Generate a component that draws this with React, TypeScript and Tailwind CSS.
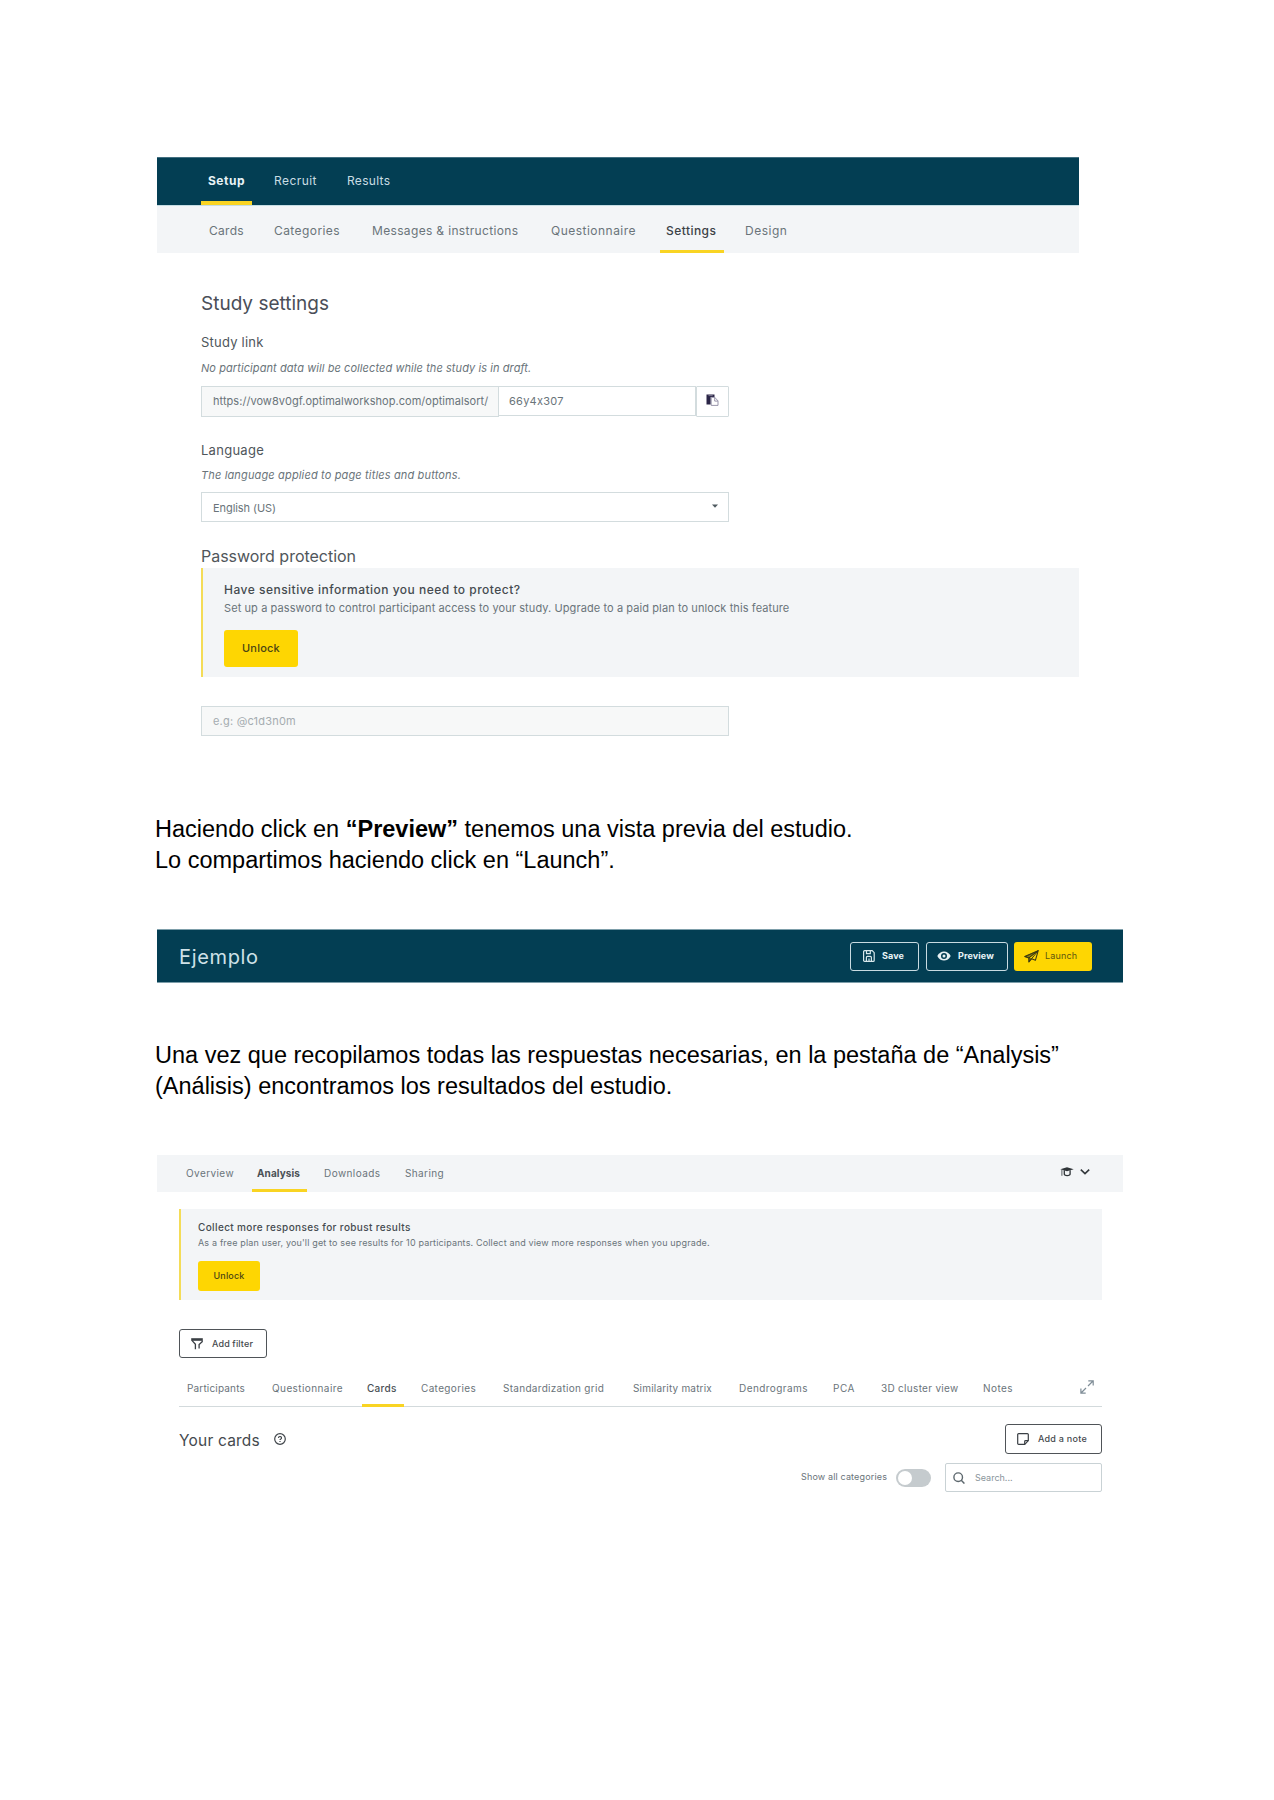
type Tab = { label: string; cell: string; active?: boolean };

const mainTabs: Tab[] = [
  { label: "Setup", cell: "w-[51px] pl-[7px] tracking-[0.51px]", active: true },
  { label: "Recruit", cell: "ml-[22px] w-[43px] tracking-[0.45px]" },
  { label: "Results", cell: "ml-[30px] w-[43px] tracking-[0.3px]" },
];

const setupTabs: Tab[] = [
  { label: "Cards", cell: "w-[35px] tracking-[0.3px]" },
  { label: "Categories", cell: "ml-[30px] w-[66px] tracking-[0.42px]" },
  { label: "Messages & instructions", cell: "ml-[32px] w-[147px] tracking-[0.34px]" },
  { label: "Questionnaire", cell: "ml-[32px] w-[85px] tracking-[0.48px]" },
  { label: "Settings", cell: "ml-[24px] w-[64px] pl-[6px] tracking-[0.45px]", active: true },
  { label: "Design", cell: "ml-[21px] w-[43px] tracking-[0.52px]" },
];

const resultTabs: Tab[] = [
  { label: "Overview", cell: "w-[48px] tracking-[0.41px]" },
  { label: "Analysis", cell: "ml-[18px] w-[55px] pl-[5px] tracking-[0.1px]", active: true },
  { label: "Downloads", cell: "ml-[17px] w-[56px] tracking-[0.43px]" },
  { label: "Sharing", cell: "ml-[25px] w-[39px] tracking-[0.38px]" },
];

const analysisTabs: Tab[] = [
  { label: "Participants", cell: "w-[58px] tracking-[0.17px]" },
  { label: "Questionnaire", cell: "ml-[27px] w-[71px] tracking-[0.41px]" },
  { label: "Cards", cell: "ml-[19px] w-[42px] pl-[5px] tracking-[0.28px]", active: true },
  { label: "Categories", cell: "ml-[17px] w-[55px] tracking-[0.35px]" },
  { label: "Standardization grid", cell: "ml-[27px] w-[101px] tracking-[0.29px]" },
  { label: "Similarity matrix", cell: "ml-[29px] w-[79px] tracking-[0.19px]" },
  { label: "Dendrograms", cell: "ml-[27px] w-[69px] tracking-[0.43px]" },
  { label: "PCA", cell: "ml-[25px] w-[23px] tracking-[0.53px]" },
  { label: "3D cluster view", cell: "ml-[25px] w-[77px] tracking-[0.3px]" },
  { label: "Notes", cell: "ml-[25px] w-[30px] tracking-[0.44px]" },
];

function ClipboardIcon() {
  return (
    <svg width="13" height="12" viewBox="0 0 13 12" className="block">
      <path d="M0.5 0.500h8v2.500H4.700v7.600H0.500z" fill="#2a2546" />
      <path d="M2.500 1.600h4.200" stroke="#8e8ba3" strokeWidth="0.800" />
      <path d="M5.200 3.400h3.600l3.200 3.500v4.500H5.200z" fill="#fff" stroke="#8e8ba3" strokeWidth="0.900" />
      <path d="M8.700 3.400v3.700h3.200" fill="none" stroke="#8e8ba3" strokeWidth="0.900" />
    </svg>
  );
}

function SaveIcon() {
  return (
    <svg width="12" height="12" viewBox="0 0 12 12" fill="none" stroke="#d9e8ec" strokeWidth="1.2" className="block">
      <path d="M1.6 0.7h7.6l2 2v7.7a1 1 0 0 1-1 1H1.6a1 1 0 0 1-1-1V1.7a1 1 0 0 1 1-1z" />
      <path d="M3.500 0.800v2.800h3.800v-2.800M3.400 11.300V7.400a1 1 0 0 1 1-1h3a1 1 0 0 1 1 1v3.900" />
      <path d="M6 8.600v2.700" />
    </svg>
  );
}

function EyeIcon() {
  return (
    <svg width="14" height="10" viewBox="0 0 14 10" className="block">
      <path d="M0.3 5C1.8 2 4.2 0.4 7 0.4S12.200 2 13.700 5C12.200 8 9.800 9.600 7 9.600S1.800 8 0.300 5z" fill="#e6f1f4" />
      <circle cx="7" cy="5" r="3" fill="#033e53" />
      <circle cx="7" cy="5" r="1.500" fill="#e6f1f4" />
    </svg>
  );
}

function PlaneIcon() {
  return (
    <svg width="15" height="13" viewBox="0 0 15 13" fill="none" stroke="#3a3a14" strokeLinejoin="round" className="block">
      <path d="M0.800 6.600L14.200 0.700L11.400 10.300L7.600 8.700L4.900 12V7.900z" strokeWidth="1.100" />
      <path d="M4.900 7.900L14.200 0.700L7.600 8.700" strokeWidth="1" />
      <path d="M0.800 6.600L14.200 0.700L4.900 7.900zM4.900 7.900L7.600 8.700L4.900 12z" fill="#3a3a14" fillOpacity="0.550" strokeWidth="0.500" />
    </svg>
  );
}

function GraduationIcon() {
  return (
    <svg width="14" height="10" viewBox="0 0 14 10" className="block">
      <path d="M0.300 2.300L7 0.200L13.700 2.300L7 4.200z" fill="#2f3438" />
      <path d="M4.300 3.200v3.900c0 1 1.200 1.500 2.900 1.500s2.900-.5 2.900-1.500V3.200" fill="none" stroke="#2f3438" strokeWidth="1.300" />
      <path d="M1.900 2.800V8.800" stroke="#555b60" strokeWidth="1" />
    </svg>
  );
}

function ChevronIcon() {
  return (
    <svg width="10" height="6" viewBox="0 0 10 6" fill="none" stroke="#33383c" strokeWidth="1.600" className="block">
      <path d="M0.800 0.700L5 4.700L9.200 0.700" />
    </svg>
  );
}

function FilterIcon() {
  return (
    <svg width="12" height="12" viewBox="0 0 12 12" fill="none" stroke="#3a3f44" className="block">
      <path d="M0.200 1.500h11.600" strokeWidth="2.600" />
      <path d="M0.900 2.400L4.400 6.200V11.200M11.200 2.400v1.200L8.100 6.600v4" strokeWidth="1.300" />
    </svg>
  );
}

function ExpandIcon() {
  return (
    <svg width="14" height="14" viewBox="0 0 14 14" fill="none" stroke="#7f8d97" strokeWidth="1.200" className="block">
      <path d="M8 6L13 1M8.300 0.900h4.900v4.600M6 8l-5 5M0.900 8.600v4.500h4.800" />
    </svg>
  );
}

function HelpIcon() {
  return (
    <svg width="12" height="12" viewBox="0 0 12 12" fill="none" stroke="#41464b" className="block">
      <circle cx="6" cy="6" r="5.300" strokeWidth="1.200" />
      <path d="M4.500 4.900a1.500 1.400 0 1 1 2.100 1.300c-.4.200-.6.400-.6.900" strokeWidth="1.200" />
      <path d="M6 8v1.100" strokeWidth="1.200" />
    </svg>
  );
}

function NoteIcon() {
  return (
    <svg width="12" height="12" viewBox="0 0 12 12" fill="none" stroke="#3a3f44" strokeWidth="1.200" strokeLinejoin="round" className="block">
      <path d="M1.600 0.700h8.800a.9.9 0 0 1 .9.900v6.100l-3.500 3.600H1.600a.9.900 0 0 1-.9-.9V1.600a.9.900 0 0 1 .9-.9z" />
      <path d="M7.700 11.200V8.500a.8.800 0 0 1 .8-.8h2.700" />
    </svg>
  );
}

function SearchIcon() {
  return (
    <svg width="12" height="12" viewBox="0 0 12 12" fill="none" stroke="#5d686e" strokeWidth="1.400" className="block">
      <circle cx="5.200" cy="5.200" r="4.300" />
      <path d="M8 8l3.400 3.600" />
    </svg>
  );
}

function TabItem({ tab, base, active, bar }: { tab: Tab; base: string; active: string; bar: string }) {
  return (
    <div className={`relative flex h-full shrink-0 items-center whitespace-nowrap ${tab.cell} ${tab.active ? active : base}`}>
      {tab.label}
      {tab.active && <span className={`absolute left-0 w-full bg-[#f9d423] ${bar}`} />}
    </div>
  );
}

function StudySettings() {
  return (
    <section className="ml-[157px] w-[922px] pt-[157px] font-[Inter,sans-serif] text-[#6a747a]">
      <nav className="flex h-[48px] items-center border-t border-[#426f80] bg-[#033e53] pl-[44px] text-[12px]">
        {mainTabs.map((t) => (
          <TabItem
            key={t.label}
            tab={t}
            base="pb-px text-[#c9dde3]"
            active="pb-px font-bold text-[#e8f3f6]"
            bar="bottom-0 h-[4px]"
          />
        ))}
      </nav>
      <nav className="flex h-[48px] items-center border-t border-[#c5dde4] bg-[#f3f5f7] pl-[52px] text-[12px]">
        {setupTabs.map((t) => (
          <TabItem key={t.label} tab={t} base="pt-[3px]" active="pt-[3px] font-medium text-[#3c4247]" bar="bottom-0 h-[3px]" />
        ))}
      </nav>
      <div className="pl-[44px]">
        <h1 className="mt-[37px] h-[28px] text-[19px] leading-[28px] text-[#4a4e58]">Study settings</h1>
        <h2 className="mt-[16px] text-[13px] leading-[16px] tracking-[0.21px] text-[#4f565b]">Study link</h2>
        <p className="mt-[10px] whitespace-nowrap text-[11px] leading-[16px] tracking-[0.08px] italic">
          No participant data will be collected while the study is in draft.
        </p>
        <div className="mt-[10px] flex h-[31px] items-start text-[11px] whitespace-nowrap">
          <div className="flex h-[31px] w-[298px] items-center border border-[#d3dcde] bg-[#f7f8f8] pl-[11px] tracking-[0.04px]">
            https://vow8v0gf.optimalworkshop.com/optimalsort/
          </div>
          <div className="flex h-[30px] w-[197px] items-center border-y border-r border-[#d3dcde] pt-px pl-[10px] tracking-[0.25px] [font-feature-settings:'calt'_0]">
            66y4x307
          </div>
          <div className="flex h-[31px] w-[33px] justify-center rounded-[1px] border border-[#d3dcde] pt-[7px]">
            <ClipboardIcon />
          </div>
        </div>
        <h2 className="mt-[25px] text-[13px] leading-[16px] tracking-[0.27px] text-[#4f565b]">Language</h2>
        <p className="mt-[9px] whitespace-nowrap text-[11px] leading-[16px] tracking-[0.15px] italic">
          The language applied to page titles and buttons.
        </p>
        <div className="mt-[9px] flex h-[30px] w-[528px] items-center justify-between border border-[#d3dcde] pt-[2px] pr-[10px] pl-[11px] text-[11px] tracking-[-0.07px]">
          English (US)
          <svg width="6" height="4" viewBox="0 0 6 4" className="-mt-[4px] block">
            <path d="M0 0.400h6L3 3.700z" fill="#4f5a60" />
          </svg>
        </div>
        <h2 className="mt-[24px] text-[16px] leading-[20px] tracking-[-0.02px] text-[#50565b]">Password protection</h2>
        <div className="mt-[2px] flex h-[109px] flex-col items-start border-l-2 border-[#f4dc57] bg-[#f3f5f7] pt-[14px] pl-[21px] whitespace-nowrap">
          <p className="text-[12px] leading-[16px] font-medium tracking-[0.49px] text-[#454b50]">
            Have sensitive information you need to protect?
          </p>
          <p className="mt-[2px] text-[11px] leading-[16px] tracking-[0.09px]">
            Set up a password to control participant access to your study. Upgrade to a paid plan to unlock this feature
          </p>
          <button className="mt-[14px] flex h-[37px] w-[74px] items-center justify-center rounded-[3px] bg-[#fed602] text-[11px] font-medium tracking-[0.22px] text-[#4a4414]">
            Unlock
          </button>
        </div>
        <div className="mt-[29px] flex h-[30px] w-[528px] items-center border border-[#d3dcde] bg-[#f7f8f8] pt-px pl-[11px] text-[11px] tracking-[0.21px] text-[#a5acb0] [font-feature-settings:'calt'_0]">
          e.g: @c1d3n0m
        </div>
      </div>
    </section>
  );
}

function StudyHeader() {
  return (
    <header className="mt-[53px] ml-[157px] flex h-[54px] w-[966px] items-center border-y border-[#7d9eaa] bg-[#033e53] pr-[31px] pl-[22px] font-[Inter,sans-serif]">
      <span className="pt-[2px] text-[20px] tracking-[0.65px] text-[#cfe2e8]">Ejemplo</span>
      <div className="ml-auto flex text-[9px] whitespace-nowrap">
        <button className="flex h-[29px] w-[69px] items-center rounded-[3px] border border-[#c9dbe1] pl-[12px] font-bold tracking-[0.11px] text-[#e8f3f6]">
          <SaveIcon />
          <span className="ml-[7px]">Save</span>
        </button>
        <button className="ml-[7px] flex h-[29px] w-[82px] items-center rounded-[3px] border border-[#c9dbe1] pl-[10px] font-bold tracking-[0.11px] text-[#e8f3f6]">
          <EyeIcon />
          <span className="ml-[7px]">Preview</span>
        </button>
        <button className="ml-[6px] flex h-[29px] w-[78px] items-center rounded-[3px] bg-[#fed602] pl-[10px] tracking-[0.15px] text-[#5c5510]">
          <PlaneIcon />
          <span className="ml-[6px]">Launch</span>
        </button>
      </div>
    </header>
  );
}

function Results() {
  return (
    <section className="mt-[53px] ml-[157px] w-[966px] font-[Inter,sans-serif] text-[#6a747a]">
      <nav className="flex h-[37px] items-center bg-[#f3f5f7] pr-[33px] pl-[29px] text-[10px]">
        {resultTabs.map((t) => (
          <TabItem key={t.label} tab={t} base="" active="font-bold text-[#4a5055]" bar="bottom-0 h-[3px]" />
        ))}
        <div className="mb-[3px] ml-auto flex items-center gap-[6px]">
          <GraduationIcon />
          <ChevronIcon />
        </div>
      </nav>
      <div className="mr-[21px] ml-[22px] whitespace-nowrap">
        <div className="mt-[17px] flex h-[91px] flex-col items-start border-l-2 border-[#f4dc57] bg-[#f3f5f7] pt-[11px] pl-[17px]">
          <p className="text-[10px] leading-[15px] font-medium tracking-[0.37px] text-[#454b50]">
            Collect more responses for robust results
          </p>
          <p className="text-[9px] leading-[15px] tracking-[0.16px]">
            As a free plan user, you&apos;ll get to see results for 10 participants. Collect and view more responses when you upgrade.
          </p>
          <button className="mt-[11px] flex h-[30px] w-[62px] items-center justify-center rounded-[3px] bg-[#fed602] text-[9px] font-medium tracking-[0.16px] text-[#4a4414]">
            Unlock
          </button>
        </div>
        <button className="mt-[29px] flex h-[29px] w-[88px] items-center rounded-[3px] border border-[#4f5458] pl-[11px] text-[9px] font-medium tracking-[0.13px] text-[#45494d]">
          <FilterIcon />
          <span className="ml-[9px]">Add filter</span>
        </button>
        <div className="mt-[14px] flex h-[35px] items-center border-b border-[#d3dadc] pr-[8px] pl-[8px] text-[10px]">
          {analysisTabs.map((t) => (
            <TabItem key={t.label} tab={t} base="pb-[2px]" active="pb-[2px] font-medium text-[#4a5055]" bar="-bottom-px h-[3px]" />
          ))}
          <div className="mb-[4px] ml-auto">
            <ExpandIcon />
          </div>
        </div>
        <div className="mt-[17px] flex h-[30px] items-center">
          <h2 className="mt-[3px] text-[15.5px] tracking-[0.2px] text-[#44494e]">Your cards</h2>
          <span className="ml-[14px]">
            <HelpIcon />
          </span>
          <button className="ml-auto flex h-[30px] w-[97px] items-center rounded-[3px] border border-[#4f5458] pl-[11px] text-[9px] font-medium tracking-[0.25px] text-[#45494d]">
            <NoteIcon />
            <span className="ml-[9px]">Add a note</span>
          </button>
        </div>
        <div className="mt-[9px] flex h-[29px] items-center justify-end text-[9px]">
          <span className="w-[86px] pb-px tracking-[0.15px]">Show all categories</span>
          <span className="ml-[9px] flex h-[18px] w-[35px] items-center rounded-full bg-[#c5cbce] p-[2px]">
            <span className="size-[14px] rounded-full bg-white" />
          </span>
          <div className="ml-[14px] flex h-[29px] w-[157px] items-center rounded-[2px] border border-[#c9d2d5] pl-[7px] text-[#8a959b]">
            <SearchIcon />
            <span className="ml-[10px]">Search...</span>
          </div>
        </div>
      </div>
    </section>
  );
}

export default function App() {
  return (
    <main className="h-[1800px] w-[1274px] overflow-hidden bg-white">
      <StudySettings />
      <p className="mt-[78px] ml-[155px] font-['Liberation_Sans',sans-serif] text-[23.5px] leading-[31px] text-black">
        Haciendo click en <b>“Preview”</b> tenemos una vista previa del estudio.
        <br />
        Lo compartimos haciendo click en “Launch”.
      </p>
      <StudyHeader />
      <p className="mt-[57px] ml-[155px] font-['Liberation_Sans',sans-serif] text-[23.5px] leading-[31px] text-black">
        Una vez que recopilamos todas las respuestas necesarias, en la pestaña de “Analysis”
        <br />
        (Análisis) encontramos los resultados del estudio.
      </p>
      <Results />
    </main>
  );
}
